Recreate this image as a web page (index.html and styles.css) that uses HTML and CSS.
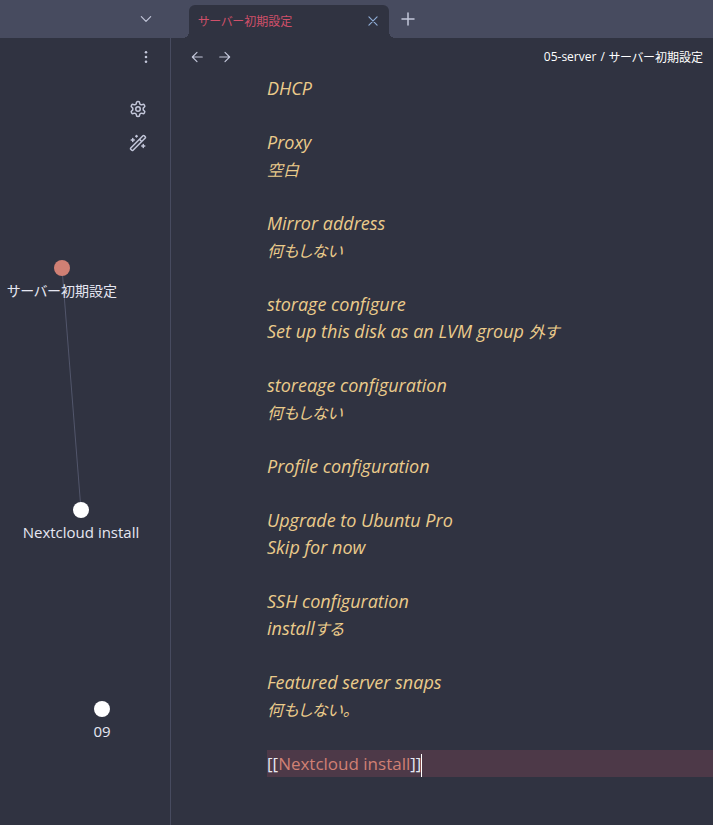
FILE: index.html
```html
<!DOCTYPE html>
<html lang="ja">
<head>
  <meta charset="UTF-8" />
  <meta name="viewport" content="width=device-width, initial-scale=1" />
  <title>サーバー初期設定</title>
  <link rel="stylesheet" href="styles.css">
</head>
<body>
  <header class="titlebar">
    <div class="titlebar-side">
      <button class="icon-btn" aria-label="Tab list"><svg class="icon" viewBox="0 0 24 24"><path d="m4 8 8 8 8-8"/></svg></button>
    </div>
    <div class="tabs">
      <div class="tab">
        <span class="tab-title">サーバー初期設定</span>
        <button class="icon-btn tab-close" aria-label="Close"><svg class="icon" viewBox="0 0 24 24"><path d="M5 5l14 14M19 5L5 19"/></svg></button>
      </div>
      <button class="icon-btn" aria-label="New tab"><svg class="icon icon-large" viewBox="0 0 24 24"><path d="M12 4v16M4 12h16"/></svg></button>
    </div>
  </header>

  <div class="workspace">
    <!-- graph view -->
    <aside class="graph">
      <div class="graph-header">
        <button class="icon-btn" aria-label="More options"><svg class="icon dots" viewBox="0 0 24 24"><circle cx="12" cy="4" r="2.2"/><circle cx="12" cy="12" r="2.2"/><circle cx="12" cy="20" r="2.2"/></svg></button>
      </div>
      <div class="graph-controls">
        <button class="icon-btn" aria-label="Graph settings"><svg class="icon icon-large" viewBox="0 0 24 24"><path d="M12.22 2h-.44a2 2 0 0 0-2 2v.18a2 2 0 0 1-1 1.73l-.43.25a2 2 0 0 1-2 0l-.15-.08a2 2 0 0 0-2.73.73l-.22.38a2 2 0 0 0 .73 2.73l.15.1a2 2 0 0 1 1 1.72v.51a2 2 0 0 1-1 1.74l-.15.09a2 2 0 0 0-.73 2.73l.22.38a2 2 0 0 0 2.73.73l.15-.08a2 2 0 0 1 2 0l.43.25a2 2 0 0 1 1 1.73V20a2 2 0 0 0 2 2h.44a2 2 0 0 0 2-2v-.18a2 2 0 0 1 1-1.73l.43-.25a2 2 0 0 1 2 0l.15.08a2 2 0 0 0 2.73-.73l.22-.39a2 2 0 0 0-.73-2.73l-.15-.08a2 2 0 0 1-1-1.74v-.5a2 2 0 0 1 1-1.74l.15-.09a2 2 0 0 0 .73-2.73l-.22-.38a2 2 0 0 0-2.73-.73l-.15.08a2 2 0 0 1-2 0l-.43-.25a2 2 0 0 1-1-1.73V4a2 2 0 0 0-2-2z"/><circle cx="12" cy="12" r="3"/></svg></button>
        <button class="icon-btn" aria-label="Animate"><svg class="icon icon-large" viewBox="0 0 24 24"><path d="m21.64 3.64-1.28-1.28a1.21 1.21 0 0 0-1.72 0L2.36 18.64a1.21 1.21 0 0 0 0 1.72l1.28 1.28a1.2 1.2 0 0 0 1.72 0L21.64 5.36a1.2 1.2 0 0 0 0-1.72ZM14 7l3 3M5 6v4M19 14v4M10 2v2M7 8H3M21 16h-4M11 3H9"/></svg></button>
      </div>
      <svg class="graph-canvas" width="170" height="580">
        <line x1="62" y1="104" x2="81" y2="346"/>
        <circle class="current" cx="62" cy="104" r="8"/>
        <text class="ja" x="62" y="132">サーバー初期設定</text>
        <circle cx="81" cy="346" r="8"/>
        <text x="81" y="374">Nextcloud install</text>
        <circle cx="102" cy="545" r="8"/>
        <text x="102" y="573">09</text>
      </svg>
    </aside>

    <main class="note">
      <div class="note-header">
        <div class="note-nav">
          <button class="icon-btn" aria-label="Back"><svg class="icon" viewBox="0 0 24 24"><path d="m12 20-8-8 8-8M21 12H4"/></svg></button>
          <button class="icon-btn" aria-label="Forward"><svg class="icon" viewBox="0 0 24 24"><path d="m12 4 8 8-8 8M3 12h17"/></svg></button>
        </div>
        <div class="breadcrumb"><a href="#">05-server</a><span class="separator">/</span><span>サーバー初期設定</span></div>
      </div>
      <article class="editor">
        <p>DHCP</p>
        <p>Proxy<br><span class="ja">空白</span></p>
        <p>Mirror address<br><span class="ja">何もしない</span></p>
        <p>storage configure<br>Set up this disk as an LVM group <span class="ja">外す</span></p>
        <p>storeage configuration<br><span class="ja">何もしない</span></p>
        <p>Profile configuration</p>
        <p>Upgrade to Ubuntu Pro<br>Skip for now</p>
        <p>SSH configuration<br>install<span class="ja">する</span></p>
        <p>Featured server snaps<br><span class="ja">何もしない。</span></p>
        <div class="active-line">[[<a href="#">Nextcloud install</a>]]<span class="caret"></span></div>
      </article>
    </main>
  </div>
</body>
</html>
```
FILE: styles.css
```css
* { margin: 0; padding: 0; box-sizing: border-box; }

:root {
  --bg: #303341;
  --bar: #474b5f;
  --text: #e6e7f2;
  --icon: #c3c7da;
  --yellow: #ebcb8b;
  --red: #d0506a;
  --link: #d08074;
}

body {
  display: flex;
  flex-direction: column;
  min-height: 100vh;
  background: var(--bg);
  color: var(--text);
  font-family: "Open Sans", "Noto Sans CJK JP", sans-serif;
  font-size: 12px;
  font-feature-settings: "palt";
  overflow-x: hidden;
}

a { color: inherit; text-decoration: none; }

.icon-btn {
  display: flex;
  align-items: center;
  justify-content: center;
  width: 28px;
  height: 28px;
  background: none;
  border: none;
  color: var(--icon);
  cursor: pointer;
}
.icon { width: 14px; height: 14px; fill: none; stroke: currentColor; stroke-width: 2; stroke-linecap: round; stroke-linejoin: round; }
.icon-large { width: 18px; height: 18px; }
.dots { fill: currentColor; stroke: none; }

/* title bar */
.titlebar { display: flex; height: 38px; background: var(--bar); }
.titlebar-side { display: flex; justify-content: flex-end; align-items: center; width: 171px; padding-right: 11px; }
.tabs { display: flex; align-items: center; padding-left: 18px; gap: 5px; }
.tab {
  position: relative;
  display: flex;
  align-items: center;
  justify-content: space-between;
  align-self: flex-end;
  width: 200px;
  height: 33px;
  padding: 0 2px 2px 9px;
  background: var(--bg);
  border-radius: 6px 6px 0 0;
  color: var(--red);
}
.tab::before, .tab::after { content: ''; position: absolute; bottom: 0; width: 6px; height: 6px; }
.tab::before { right: 100%; background: radial-gradient(circle at 0 0, transparent 6px, var(--bg) 6px); }
.tab::after { left: 100%; background: radial-gradient(circle at 100% 0, transparent 6px, var(--bg) 6px); }
.tab-close { color: #8fadd6; }

.workspace { display: flex; flex: 1; }

/* graph */
.graph { width: 171px; border-right: 1px solid var(--bar); }
.graph-header { display: flex; justify-content: flex-end; align-items: center; height: 38px; padding-right: 10px; }
.graph-controls { display: flex; flex-direction: column; align-items: flex-end; gap: 6px; padding: 19px 18px 7px 0; }
.graph-canvas { display: block; }
.graph-canvas line { stroke: #52566b; }
.graph-canvas circle { fill: #fff; }
.graph-canvas .current { fill: var(--link); }
.graph-canvas text { fill: var(--text); font-size: 15px; text-anchor: middle; }
.graph-canvas .ja { font-size: 14px; }

/* note */
.note { flex: 1; min-width: 0; }
.note-header { display: flex; justify-content: space-between; align-items: center; height: 37px; padding: 0 10px 0 12px; }
.note-nav { display: flex; }
.breadcrumb { display: flex; color: #fff; }
.separator { margin: 0 4px; }

.editor { padding-left: 96px; font-size: 17px; line-height: 27px; }
.editor p { margin-bottom: 27px; color: var(--yellow); font-size: 18px; font-style: italic; }
.editor .ja { font-size: 16px; line-height: 1; }
.active-line { background: #4d3948; }
.active-line a { color: var(--link); }
.caret { display: inline-block; width: 1px; height: 23px; background: #fff; vertical-align: middle; }
```
